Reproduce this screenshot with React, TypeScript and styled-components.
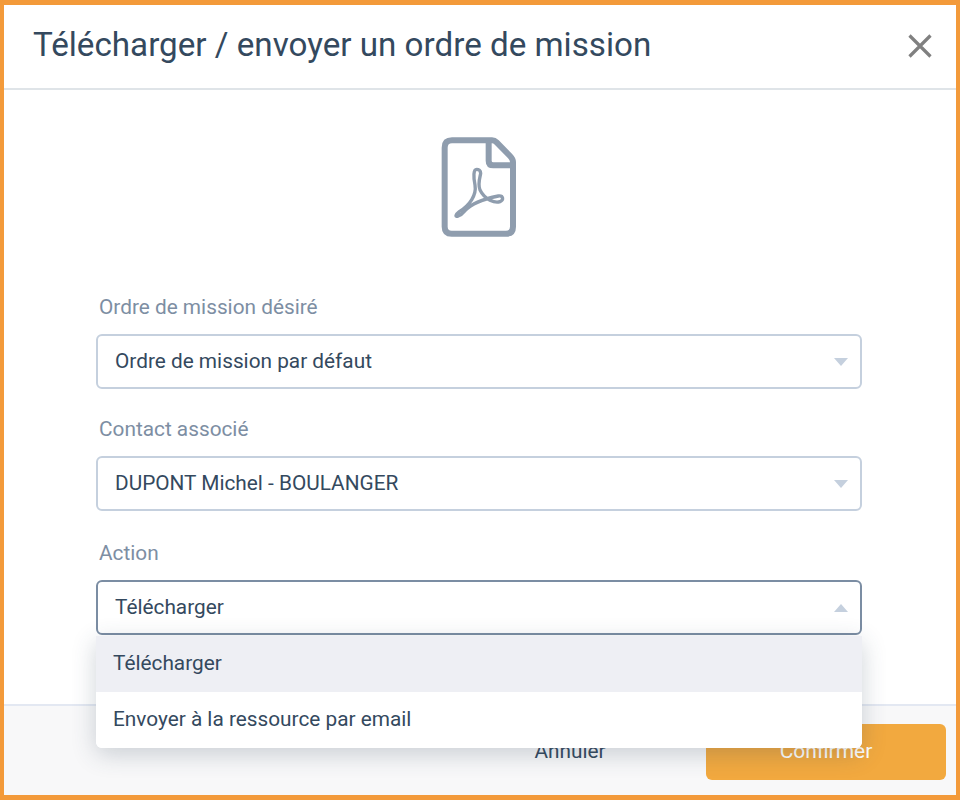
import React from 'react';
import styled, { createGlobalStyle } from 'styled-components';

const GlobalStyle = createGlobalStyle`
	html, body {
		margin: 0;
		padding: 0;
		background: #ffffff;
		font-family: Roboto, "Liberation Sans", sans-serif;
	}
	* {
		box-sizing: border-box;
	}
`;

const Frame = styled.div`
	width: 960px;
	height: 800px;
	display: flex;
	flex-direction: column;
	border-style: solid;
	border-color: #f39a3a;
	border-width: 5px 4px;
	background: #ffffff;
`;

const Header = styled.div`
	height: 85px;
	flex-shrink: 0;
	display: flex;
	align-items: center;
	justify-content: space-between;
	padding: 0 24px 2px 29px;
	border-bottom: 2px solid #dfe4e8;
`;

const Title = styled.h1`
	margin: 0 0 3px;
	font-size: 33.2px;
	font-weight: 400;
	color: #34495e;
`;

const Close = styled.svg`
	width: 24px;
	height: 24px;
	stroke: #808080;
	stroke-width: 3.2;
	fill: none;
`;

const Body = styled.div`
	flex: 1;
	display: flex;
	flex-direction: column;
	padding: 45px 94px 0 92px;
`;

const IconRow = styled.div`
	display: flex;
	justify-content: center;
	padding-left: 2px;
	margin: 0 0 55px;
`;

const PdfIcon = styled.svg`
	display: block;
	width: 80px;
	height: 105px;
	fill: none;
	stroke: #8f9dae;
	stroke-linejoin: round;
`;

const Field = styled.div`
	position: relative;
	margin-bottom: ${(props: { $gap: number }) => props.$gap}px;
`;

const Label = styled.div`
	font-size: 20.8px;
	line-height: 24px;
	color: #7d8ea3;
	margin: 0 0 15px 3px;
`;

const Select = styled.div<{ $open?: boolean }>`
	height: 55px;
	display: flex;
	align-items: center;
	justify-content: space-between;
	padding: 0 12px 2px 17px;
	font-size: 20.8px;
	color: #34495e;
	background: #ffffff;
	border: 2px solid ${(props) => (props.$open ? '#7b8da3' : '#c5d0de')};
	border-radius: 6px;
`;

const Caret = styled.span<{ $open?: boolean }>`
	width: 0;
	height: 0;
	margin-top: 2px;
	border-left: 7px solid transparent;
	border-right: 7px solid transparent;
	${(props) => (props.$open ? 'border-bottom' : 'border-top')}: 8px solid #c5d0de;
`;

const Menu = styled.div`
	position: absolute;
	left: 0;
	right: 0;
	top: 95px;
	z-index: 5;
	background: #ffffff;
	border-radius: 0 0 6px 6px;
	overflow: hidden;
	box-shadow: 0 6px 24px rgba(52, 73, 94, 0.24);
`;

const MenuItem = styled.div<{ $active?: boolean }>`
	height: 56px;
	display: flex;
	align-items: center;
	padding: 0 17px 2px;
	font-size: 20.8px;
	color: #34495e;
	background: ${(props) => (props.$active ? '#eeeff4' : '#ffffff')};
`;

const Footer = styled.div`
	height: 91px;
	flex-shrink: 0;
	display: flex;
	justify-content: flex-end;
	align-items: flex-start;
	padding: 18px 10px 0 0;
	background: #f8f8f9;
	border-top: 2px solid #e3e8f2;
`;

const CancelButton = styled.div`
	width: 240px;
	height: 56px;
	margin-right: 16px;
	padding-bottom: 2px;
	display: flex;
	align-items: center;
	justify-content: center;
	font-size: 20.8px;
	color: #34495e;
`;

const ConfirmButton = styled.div`
	width: 240px;
	height: 56px;
	padding-bottom: 2px;
	display: flex;
	align-items: center;
	justify-content: center;
	font-size: 21px;
	color: #ffffff;
	background: #f2a93f;
	border-radius: 6px;
`;

function App() {
	return (
		<Frame>
			<GlobalStyle />
			<Header>
				<Title>Télécharger / envoyer un ordre de mission</Title>
				<Close viewBox="0 0 24 24">
					<path d="M1.5 1.5L22.5 22.5M22.5 1.5L1.5 22.5" />
				</Close>
			</Header>
			<Body>
				<IconRow>
					<PdfIcon viewBox="60 45 240 315">
						<path
							strokeWidth="18"
							d="M96 61H216Q224 61 230 67L270 108Q279 117 279 126V320Q279 341 258 341H95Q74 341 74 320V83Q74 61 96 61Z"
						/>
						<path strokeWidth="18" d="M206 61V122Q206 136 220 136H279" />
						<path
							strokeWidth="10"
							d="M170 148C160 148 160 170 165 195C170 225 150 255 118 275C105 285 105 292 115 288C125 285 130 278 135 272C155 250 200 235 235 228C250 226 252 240 240 245C225 250 195 240 180 210C172 190 182 165 182 160C182 152 176 148 170 148Z"
						/>
					</PdfIcon>
				</IconRow>
				<Field $gap={28}>
					<Label>Ordre de mission désiré</Label>
					<Select>
						Ordre de mission par défaut
						<Caret />
					</Select>
				</Field>
				<Field $gap={30}>
					<Label>Contact associé</Label>
					<Select>
						DUPONT Michel - BOULANGER
						<Caret />
					</Select>
				</Field>
				<Field $gap={0}>
					<Label>Action</Label>
					<Select $open>
						Télécharger
						<Caret $open />
					</Select>
					<Menu>
						<MenuItem $active>Télécharger</MenuItem>
						<MenuItem>Envoyer à la ressource par email</MenuItem>
					</Menu>
				</Field>
			</Body>
			<Footer>
				<CancelButton>Annuler</CancelButton>
				<ConfirmButton>Confirmer</ConfirmButton>
			</Footer>
		</Frame>
	);
}

export default App;
